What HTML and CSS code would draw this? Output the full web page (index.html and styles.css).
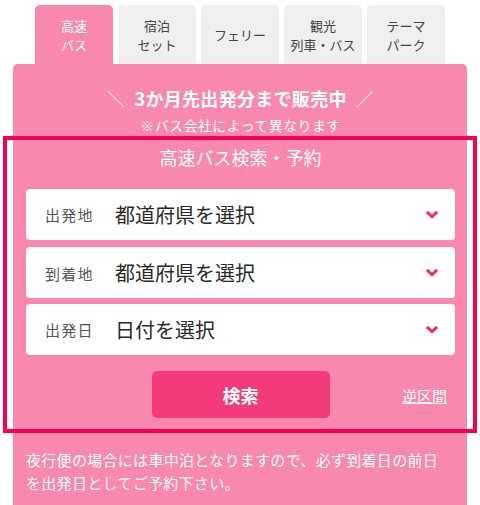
FILE: index.html
```html
<!DOCTYPE html>
<html lang="ja">
<head>
<meta charset="utf-8">
<title>高速バス検索・予約</title>
<link rel="stylesheet" href="styles.css">
</head>
<body>
<div class="tabs">
  <div class="tab active"><span class="tl">高速</span><span class="tl">バス</span></div>
  <div class="tab"><span class="tl">宿泊</span><span class="tl">セット</span></div>
  <div class="tab"><span class="tl">フェリー</span></div>
  <div class="tab"><span class="tl">観光</span><span class="tl">列車・バス</span></div>
  <div class="tab"><span class="tl">テーマ</span><span class="tl">パーク</span></div>
</div>
<div class="panel">
  <div class="headline"><span class="slash">＼</span><span class="head-text">3か月先出発分まで販売中</span><span class="slash">／</span></div>
  <div class="sub">※バス会社によって異なります</div>
  <div class="title">高速バス検索・予約</div>
  <div class="fields">
    <div class="field">
      <span class="label">出発地</span>
      <span class="value">都道府県を選択</span>
      <svg class="chev" width="14" height="9" viewBox="0 0 14 9"><polyline points="1.8,1.8 7,6.6 12.2,1.8" fill="none" stroke="#f0306e" stroke-width="3"/></svg>
    </div>
    <div class="field">
      <span class="label label-low">到着地</span>
      <span class="value">都道府県を選択</span>
      <svg class="chev" width="14" height="9" viewBox="0 0 14 9"><polyline points="1.8,1.8 7,6.6 12.2,1.8" fill="none" stroke="#f0306e" stroke-width="3"/></svg>
    </div>
    <div class="field">
      <span class="label">出発日</span>
      <span class="value">日付を選択</span>
      <svg class="chev" width="14" height="9" viewBox="0 0 14 9"><polyline points="1.8,1.8 7,6.6 12.2,1.8" fill="none" stroke="#f0306e" stroke-width="3"/></svg>
    </div>
  </div>
  <div class="actions">
    <button class="search" type="button">検索</button>
    <a class="reverse" href="#">逆区間</a>
  </div>
  <p class="note">夜行便の場合には車中泊となりますので、必ず到着日の前日<br>を出発日としてご予約下さい。</p>
</div>
<div class="highlight"></div>
</body>
</html>
```
FILE: styles.css
```css
* { box-sizing: border-box; }
html, body { margin: 0; padding: 0; background: #fff; }
body {
  position: relative;
  padding-top: 5px;
  font-family: "Noto Sans CJK JP", "Noto Sans", sans-serif;
  color: #222;
  height: 505px;
  overflow: hidden;
}
.tabs {
  display: flex;
  gap: 5px;
  width: 410px;
  margin: 0 auto;
}
.tab {
  width: 78px;
  height: 59px;
  background: #efefef;
  border-radius: 5px 5px 0 0;
  display: flex;
  flex-direction: column;
  align-items: center;
  justify-content: center;
  text-align: center;
  font-size: 13px;
  line-height: 19px;
  color: #444;
}
.tl { display: block; white-space: nowrap; }
.tab.active {
  background: #f888ae;
  color: #fff;
}
.panel {
  margin: 0 13px;
  background: #f888ae;
  border-radius: 5px 5px 0 0;
  padding: 22px 12px 30px 13px;
  color: #fff;
}
.headline {
  display: flex;
  justify-content: center;
  align-items: center;
  height: 24px;
  font-size: 18px;
}
.head-text {
  font-weight: 700;
  letter-spacing: 0.3px;
  margin-right: -0.3px;
}
.slash {
  font-weight: 400;
  margin: 0 10px;
  font-size: 17px;
}
.sub {
  margin-top: 5px;
  text-align: center;
  font-size: 14px;
  line-height: 20px;
  letter-spacing: 0.4px;
}
.title {
  margin-top: 10px;
  text-align: center;
  font-size: 18px;
  line-height: 24px;
}
.fields {
  margin-top: 20px;
  display: flex;
  flex-direction: column;
  gap: 6.5px;
}
.field {
  height: 51px;
  background: #fff;
  border-radius: 4px;
  display: flex;
  align-items: center;
  padding: 0 16px 0 19px;
}
.label {
  width: 70px;
  font-size: 15px;
  letter-spacing: 1.3px;
  color: #555;
}
.label-low { padding-top: 3px; }
.value {
  flex: 1;
  font-size: 20px;
  color: #2a2a2a;
}
.chev { display: block; }
.actions {
  margin-top: 16px;
  display: grid;
  grid-template-columns: 1fr 178px 1fr;
  align-items: center;
}
.search {
  grid-column: 2;
  height: 47px;
  border: none;
  border-radius: 5px;
  background: #f33b7b;
  color: #fff;
  font-family: inherit;
  font-size: 18px;
  font-weight: 700;
  padding: 0;
}
.reverse {
  grid-column: 3;
  justify-self: end;
  margin-right: 8px;
  color: #fff;
  font-size: 15px;
  text-decoration: underline;
  padding-top: 2px;
}
.note {
  margin: 30px 0 0;
  font-size: 15px;
  line-height: 23px;
  letter-spacing: 0.3px;
}
.highlight {
  position: absolute;
  left: 3px;
  top: 136px;
  width: 474px;
  height: 297px;
  border: 4px solid #f50057;
  pointer-events: none;
}
```
